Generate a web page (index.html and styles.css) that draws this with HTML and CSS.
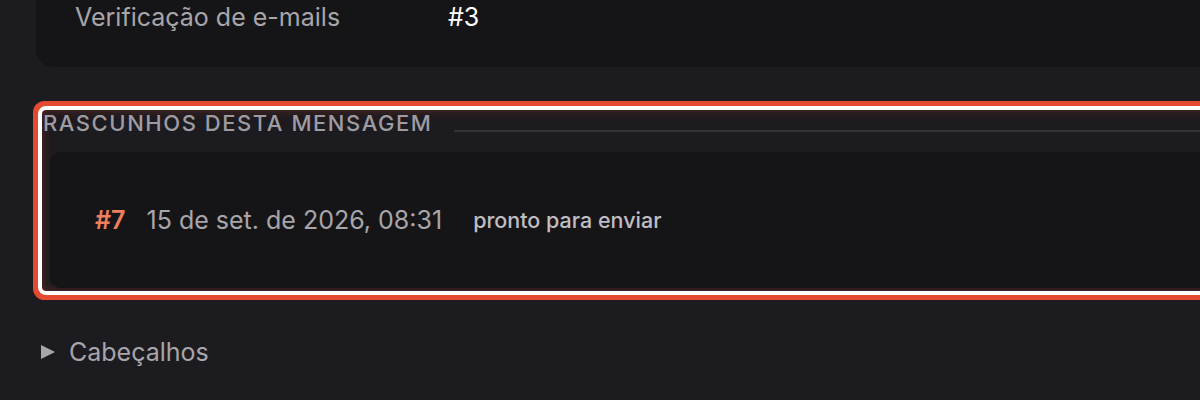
FILE: index.html
```html
<!DOCTYPE html>
<html lang="pt">
<head>
<meta charset="utf-8">
<link rel="stylesheet" href="styles.css">
</head>
<body>
<main class="page">
  <section class="info-card">
    <div class="info-row">
      <span class="info-label">Verificação de e-mails</span>
      <span class="info-value">#3</span>
    </div>
  </section>

  <section class="drafts highlighted">
    <div class="drafts-heading">
      <h2 class="drafts-title">Rascunhos desta mensagem</h2>
      <span class="drafts-rule"></span>
    </div>
    <div class="draft-card">
      <span class="draft-id">#7</span>
      <span class="draft-date">15 de set. de 2026, 08:31</span>
      <span class="draft-status">pronto para enviar</span>
    </div>
  </section>

  <div class="headers-toggle">
    <span class="toggle-arrow"></span>
    <span class="toggle-label">Cabeçalhos</span>
  </div>
</main>
</body>
</html>
```

FILE: styles.css
```css
html, body {
  margin: 0;
  padding: 0;
  background: #1c1b1f;
  overflow: hidden;
}

body {
  font-family: Inter, "Noto Sans", sans-serif;
  color: #a8a5ab;
}

.page {
  width: 1260px;
  padding-left: 36px;
  box-sizing: border-box;
}

.info-card {
  background: #151517;
  border-radius: 0 0 0 18px;
  padding: 0 0 33px 39px;
}

.info-row {
  display: grid;
  grid-template-columns: 373px auto;
  font-size: 25px;
  line-height: 34px;
}

.info-label {
  color: #a8a5ab;
}

.info-value {
  color: #ffffff;
}

.drafts {
  margin: 43px 0 0 6px;
  padding: 0 0 3px 0;
  border-radius: 4px;
}

.highlighted {
  outline: 4px solid #ffffff;
  box-shadow: 0 0 0 9px #e44a30, inset 0 0 12px rgba(200, 60, 40, 0.35);
}

.drafts-heading {
  display: flex;
  align-items: flex-start;
  gap: 21px;
  height: 42px;
}

.drafts-title {
  margin: 0;
  font-size: 22px;
  font-weight: 500;
  letter-spacing: 1.55px;
  text-transform: uppercase;
  color: #9f9ba3;
  line-height: 26px;
  white-space: nowrap;
  padding-left: 1px;
}

.drafts-rule {
  flex: 1;
  height: 2px;
  background: #333237;
  margin-top: 20px;
}

.draft-card {
  margin-left: 8px;
  background: #151517;
  border-radius: 10px;
  height: 136px;
  display: flex;
  align-items: center;
  padding-left: 45px;
}

.draft-id {
  color: #ef7f5d;
  font-size: 25px;
  font-weight: 600;
  margin-right: 21px;
}

.draft-date {
  color: #a8a5ab;
  font-size: 25px;
  margin-right: 31px;
}

.draft-status {
  color: #c0bdc3;
  font-size: 21.5px;
  font-weight: 500;
}

.headers-toggle {
  display: flex;
  align-items: center;
  margin-top: 46px;
  padding-left: 5px;
}

.toggle-arrow {
  width: 0;
  height: 0;
  border-top: 7.5px solid transparent;
  border-bottom: 7.5px solid transparent;
  border-left: 14px solid #a8a5ab;
  margin-right: 14px;
}

.toggle-label {
  font-size: 25px;
  color: #a8a5ab;
}
```
